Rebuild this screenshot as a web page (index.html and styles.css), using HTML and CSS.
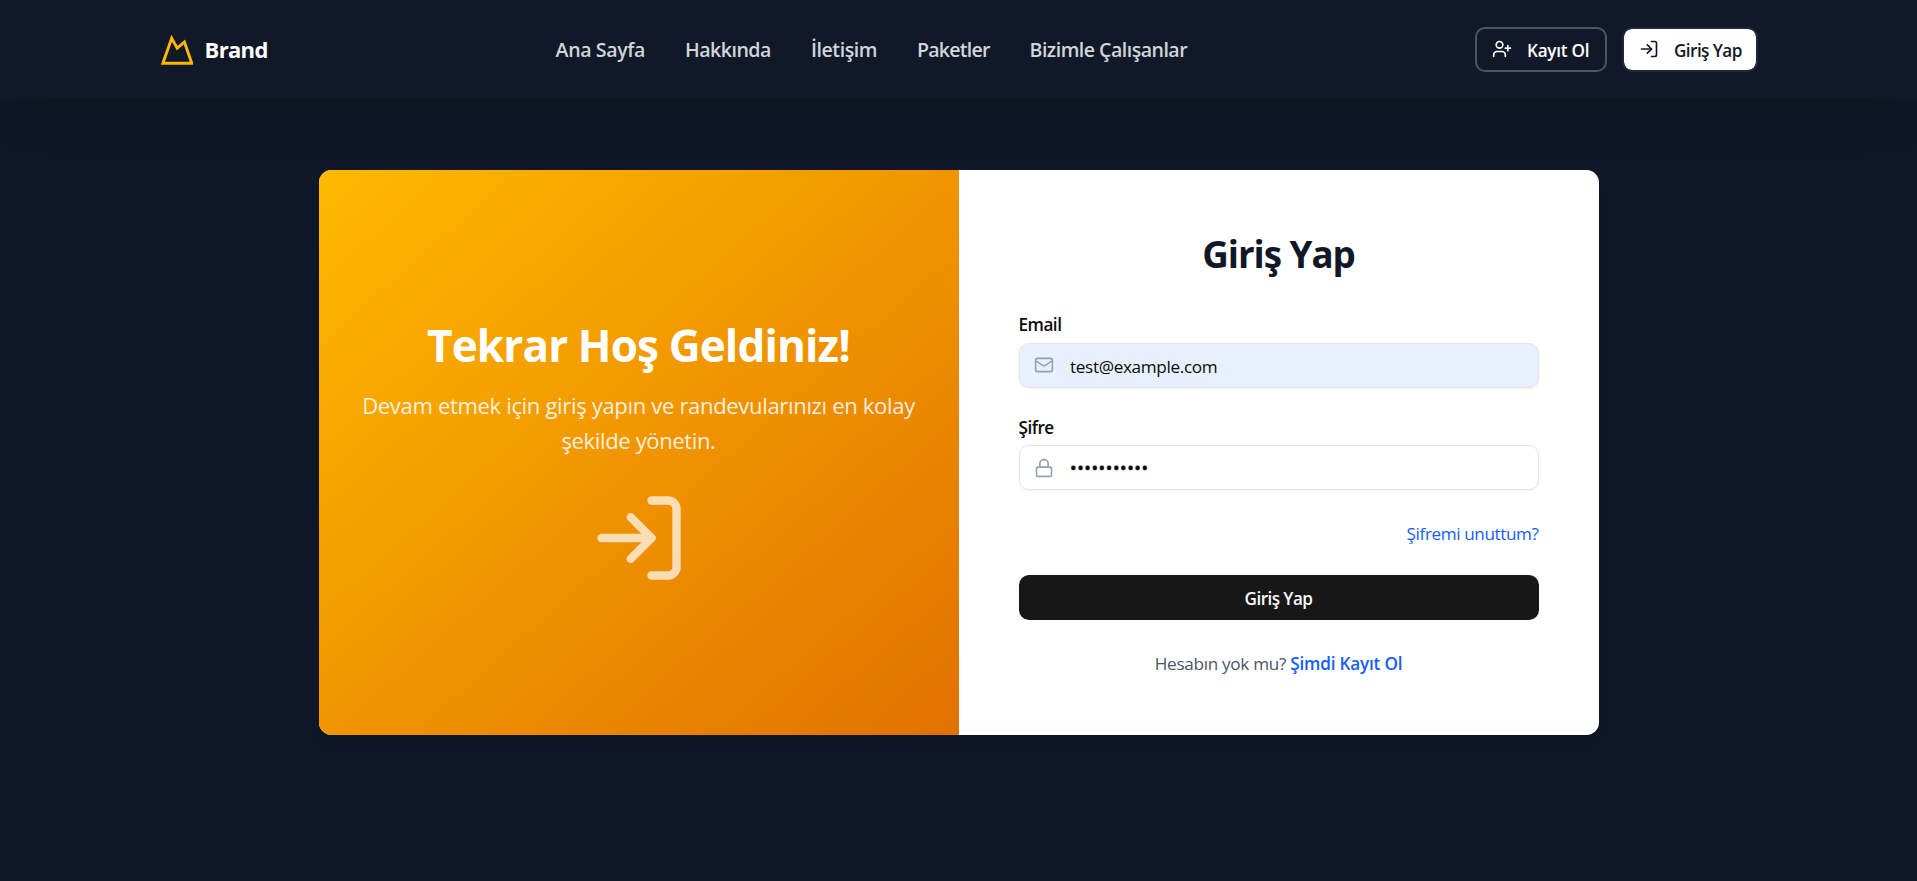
FILE: index.html
```html
<!DOCTYPE html>
<html lang="tr">
<head>
<meta charset="utf-8">
<title>Giriş Yap</title>
<link rel="stylesheet" href="styles.css">
</head>
<body>
<header class="header">
  <div class="header-inner">
    <a class="brand">
      <svg class="brand-icon" viewBox="0 0 32 32"><path d="M1.9 29.2 10.7 4.2l5.5 10 7.2-6.2 7.4 21.2z"/></svg>
      <span class="brand-name">Brand</span>
    </a>
    <nav class="nav">
      <a class="n1">Ana Sayfa</a>
      <a class="n2">Hakkında</a>
      <a class="n3">İletişim</a>
      <a class="n4">Paketler</a>
      <a class="n5">Bizimle Çalışanlar</a>
    </nav>
    <div class="actions">
      <button class="btn btn-outline">
        <svg class="icon" viewBox="0 0 24 24"><path d="M16 21v-2a4 4 0 0 0-4-4H6a4 4 0 0 0-4 4v2"/><circle cx="9" cy="7" r="4"/><path d="M19 8v6M22 11h-6"/></svg>
        <span>Kayıt Ol</span>
      </button>
      <button class="btn btn-light">
        <svg class="icon" viewBox="0 0 24 24"><path d="M15 3h4a2 2 0 0 1 2 2v14a2 2 0 0 1-2 2h-4"/><path d="m10 17 5-5-5-5"/><path d="M15 12H3"/></svg>
        <span>Giriş Yap</span>
      </button>
    </div>
  </div>
</header>
<main class="main">
  <div class="card">
    <section class="welcome">
      <h1>Tekrar Hoş Geldiniz!</h1>
      <p>Devam etmek için giriş yapın ve randevularınızı en kolay <span class="line2">şekilde yönetin.</span></p>
      <svg class="icon-big" viewBox="0 0 24 24"><path d="M15 3h4a2 2 0 0 1 2 2v14a2 2 0 0 1-2 2h-4"/><path d="m10 17 5-5-5-5"/><path d="M15 12H3"/></svg>
    </section>
    <form class="form">
      <h2>Giriş Yap</h2>
      <label class="label">Email</label>
      <div class="field field-filled">
        <svg class="icon" viewBox="0 0 24 24"><rect x="2" y="4" width="20" height="16" rx="2"/><path d="m22 7-8.97 5.7a1.94 1.94 0 0 1-2.06 0L2 7"/></svg>
        <span class="value">test@example.com</span>
      </div>
      <label class="label label-second">Şifre</label>
      <div class="field">
        <svg class="icon icon-lock" viewBox="0 0 24 24"><rect x="3" y="11" width="18" height="11" rx="2"/><path d="M7 11V7a5 5 0 0 1 10 0v4"/></svg>
        <span class="dots">•••••••••••</span>
      </div>
      <a class="forgot">Şifremi unuttum?</a>
      <button class="submit" type="button">Giriş Yap</button>
      <p class="signup">Hesabın yok mu? <a>Şimdi Kayıt Ol</a></p>
    </form>
  </div>
</main>
</body>
</html>
```
FILE: styles.css
```css
* { box-sizing: border-box; margin: 0; padding: 0; }
body {
  min-height: 881px;
  background: #101828;
  font-family: "Open Sans", "Noto Sans", sans-serif;
  font-size: 17.15px;
  color: #0a0a0a;
}
button { font: inherit; }
svg { display: block; flex: none; fill: none; stroke: currentColor; stroke-width: 2; stroke-linecap: round; stroke-linejoin: round; }
.icon { width: 20px; height: 20px; }

.header { height: 99px; background: #111827; box-shadow: 0 25px 50px -15px rgba(0, 0, 0, .22); }
.header-inner {
  width: 1600px;
  height: 99px;
  margin: 0 auto;
  display: flex;
  align-items: center;
  justify-content: space-between;
}
.brand { display: flex; align-items: center; gap: 12px; padding-left: 2px; color: #fff; }
.brand-icon { width: 32px; height: 32px; color: #ffb900; stroke-width: 2.9; stroke-linejoin: miter; }
.brand-name { font-size: 22px; font-weight: 700; line-height: 30px; letter-spacing: -.65px; padding-bottom: 2px; }
.nav { display: flex; gap: 40px; font-size: 19.6px; font-weight: 600; line-height: 30px; color: #d1d5dc; }
.n1 { letter-spacing: -.4px; }
.n2 { letter-spacing: -.5px; }
.n3 { letter-spacing: -.44px; }
.n4 { letter-spacing: -.8px; }
.n5 { letter-spacing: -.53px; }
.actions { display: flex; gap: 15px; }
.btn {
  height: 45px;
  display: flex;
  align-items: center;
  gap: 15px;
  padding: 0 0 0 15px;
  border-radius: 10px;
}
.btn .icon { margin-bottom: 2px; }
.btn span { padding-top: 1px; }
.btn-outline { width: 132px; border: 2px solid #4a5565; background: transparent; color: #fff; font-weight: 600; letter-spacing: -.25px; }
.btn-light { width: 136.5px; border: 2px solid #1e2939; background: #fff; background-clip: padding-box; color: #101828; font-weight: 600; letter-spacing: -.57px; }

.main { display: flex; justify-content: center; padding-top: 71px; }
.card {
  width: 1280px;
  height: 565px;
  display: grid;
  grid-template-columns: 1fr 1fr;
  border-radius: 12.5px;
  overflow: hidden;
  background: #fff;
  box-shadow: 0 10px 15px -3px rgba(0, 0, 0, .08), 0 4px 6px -4px rgba(0, 0, 0, .08);
}
.welcome {
  display: flex;
  flex-direction: column;
  align-items: center;
  justify-content: center;
  padding: 3px 40px 0;
  background: linear-gradient(to bottom right, #ffb900, #e17100);
  color: #fff;
  text-align: center;
}
.welcome h1 { font-size: 44.1px; line-height: 50px; letter-spacing: -.9px; margin-bottom: 18px; }
.welcome p { font-size: 22.05px; line-height: 35px; letter-spacing: -.34px; opacity: .85; margin-bottom: 30px; }
.line2 { display: block; letter-spacing: -.38px; }
.icon-big { width: 100px; height: 100px; opacity: .7; }

.form { display: flex; flex-direction: column; padding: 62px 60px 0; }
.form h2 { font-size: 36.75px; line-height: 45px; letter-spacing: -1.03px; text-align: center; color: #101828; }
.label { margin-top: 39px; line-height: 18px; font-weight: 600; letter-spacing: -.5px; }
.label-second { margin-top: 31px; }
.field {
  height: 45px;
  margin-top: 9px;
  display: flex;
  align-items: center;
  gap: 16.5px;
  padding-left: 14px;
  border: 1px solid #e5e5e5;
  border-radius: 10px;
  box-shadow: 0 1px 3px rgba(0, 0, 0, .06);
}
.label-second + .field { margin-top: 8px; }
.field-filled { background: #e8f0fe; }
.field .icon { color: #99a1af; margin-bottom: 1px; }
.field .icon-lock { margin-bottom: 0; }
.value { padding-top: 1px; letter-spacing: -.34px; }
.dots { padding-top: 1px; font-size: 17.5px; letter-spacing: .57px; -webkit-text-stroke: .6px #0a0a0a; }
.forgot { margin-top: 31px; line-height: 25px; align-self: flex-end; color: #155dfc; letter-spacing: -.4px; }
.submit { height: 45px; margin-top: 29px; padding-top: 1px; border: 0; border-radius: 10px; background: #171717; color: #fafafa; font-weight: 600; letter-spacing: -.57px; }
.signup { margin-top: 31px; line-height: 25px; text-align: center; color: #4a5565; letter-spacing: -.3px; }
.signup a { color: #155dfc; font-weight: 600; letter-spacing: -.2px; }
```
